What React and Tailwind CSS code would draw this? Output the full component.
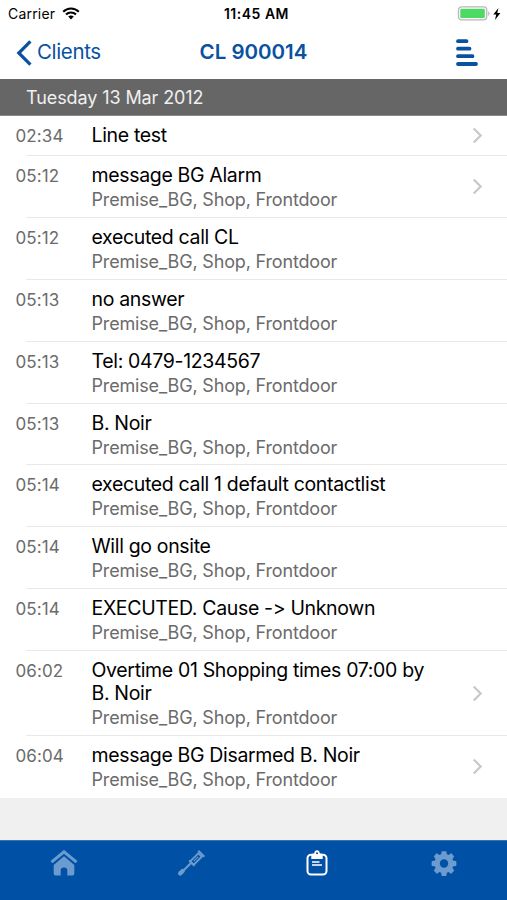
const entries = [
  { time: "02:34", title: "Line test", more: true },
  { time: "05:12", title: "message BG Alarm", place: true, more: true },
  { time: "05:12", title: "executed call CL", place: true },
  { time: "05:13", title: "no answer", place: true },
  { time: "05:13", title: "Tel: 0479-1234567", place: true },
  { time: "05:13", title: "B. Noir", place: true },
  { time: "05:14", title: "executed call 1 default contactlist", place: true },
  { time: "05:14", title: "Will go onsite", place: true },
  { time: "05:14", title: "EXECUTED. Cause -> Unknown", place: true },
  { time: "06:02", title: "Overtime 01 Shopping times 07:00 by B. Noir", place: true, more: true },
  { time: "06:04", title: "message BG Disarmed B. Noir", place: true, more: true },
];

function StatusBar() {
  return (
    <div className="grid h-[27px] grid-cols-3 items-center pl-[8px] pr-[6px] text-[14px] leading-none text-black">
      <div className="flex items-center gap-[7px]">
        <span className="tracking-[0.2px]">Carrier</span>
        <svg width="18" height="13" viewBox="0 0 18 13" fill="none" stroke="currentColor" strokeWidth="2.1">
          <path d="M1.2 4.7C5.6.4 12.4.4 16.8 4.7" />
          <path d="M4 7.6C6.8 4.8 11.2 4.8 14 7.6" />
          <path d="M9 12.4 6.2 9.5C7.8 8 10.2 8 11.8 9.5Z" fill="currentColor" stroke="none" />
        </svg>
      </div>
      <span className="pl-[4px] text-center font-semibold tracking-[0.5px]">11:45 AM</span>
      <div className="flex items-center justify-end gap-[3px]">
        <svg width="33" height="15" viewBox="0 0 33 15">
          <rect x="1.5" y="0.8" width="28.2" height="13" rx="3" fill="none" stroke="#b8b8b8" strokeWidth="1.3" />
          <rect x="3.3" y="2.7" width="24.5" height="9.4" rx="1" fill="#4cd964" />
          <path d="M31.2 5v5c1.7-.8 1.7-4.2 0-5Z" fill="#b8b8b8" />
        </svg>
        <svg width="8" height="12" viewBox="0 0 8 12" fill="currentColor">
          <path d="M5.4 0 .3 6.5h2.9L2 12l5.4-7H4.3Z" />
        </svg>
      </div>
    </div>
  );
}

function NavBar() {
  return (
    <header className="grid h-[52px] grid-cols-3 items-center text-[20.5px] text-[#08529f]">
      <button className="flex items-center gap-[5px] pb-px pl-4 tracking-[-0.35px]">
        <svg width="16" height="26" viewBox="0 0 16 26" fill="none" stroke="currentColor" strokeWidth="3.2">
          <path d="M14.4 1.4 2.8 13l11.6 11.6" />
        </svg>
        Clients
      </button>
      <h1 className="pb-px text-center font-semibold">CL 900014</h1>
      <button className="flex justify-end pb-px pr-7">
        <svg width="24" height="28" viewBox="0 0 24 28" fill="none" stroke="currentColor" strokeWidth="3.8" strokeLinecap="round">
          <path d="M3 2.2h8.5M3 9.7h11.5M3 17.2h14.5M3 25h18" />
        </svg>
      </button>
    </header>
  );
}

function Entry({ entry, last }) {
  return (
    <li className="pl-[26px]">
      <div className={last ? "flex h-[61.9px]" : entry.place ? "flex min-h-[61.9px] border-b border-[#e8e8e8]" : "flex h-[40px] border-b border-[#e8e8e8]"}>
        <time className="-ml-[10.5px] w-[76px] shrink-0 pt-[8px] text-[17px] leading-6 tracking-[0.1px] text-[#6b6b6b]">{entry.time}</time>
        <div className={entry.place ? "w-[350px] pb-[4.9px] pt-[8px]" : "w-[350px] pt-[8px]"}>
          <p className="text-[19.5px] leading-[23px] tracking-[-0.34px] text-black">{entry.title}</p>
          {entry.place && (
            <p className="text-[18px] leading-[25px] tracking-[-0.17px] text-[#6b6b6b]">Premise_BG, Shop, Frontdoor</p>
          )}
        </div>
        {entry.more && (
          <svg className="ml-auto mr-6 self-center" width="11" height="17" viewBox="0 0 11 17" fill="none" stroke="#c7c7cc" strokeWidth="2.2">
            <path d="m1.7 1.5 7 7-7 7" />
          </svg>
        )}
      </div>
    </li>
  );
}

function TabBar() {
  return (
    <nav className="mt-auto grid h-[60px] grid-cols-4 border-t border-[#3974a8] bg-[#0051a5] pt-[9px] text-[#6b9bcf]">
      <button className="flex items-start justify-center pl-[2px]">
        <svg width="28" height="27" viewBox="0 0 28 27">
          <path d="M1.5 12.2 14 1.8l12.5 10.4" fill="none" stroke="currentColor" strokeWidth="3" />
          <path d="m14 6.3 10.3 8.6v8.8q0 1.8-1.8 1.8h-5.2v-5.4q0-2.6-3.3-2.6t-3.3 2.6v5.4H5.5q-1.8 0-1.8-1.8v-8.8Z" fill="currentColor" />
        </svg>
      </button>
      <button className="flex items-start justify-center pl-[1px]">
        <svg width="28" height="27" viewBox="0 0 28 27" fill="none" stroke="currentColor">
          <path d="m4 23 10-10" strokeWidth="2.1" />
          <path d="m3.2 23.4 2.4-2.4" strokeWidth="4.4" strokeLinecap="round" />
          <path d="m13.2 11.4 8.1-8.1 3.4 3.4-8.1 8.1Z" strokeWidth="1.9" />
          <path d="m16.8 11.2 4.3-4.3" strokeWidth="1.1" />
          <path d="m21.3.7 6 6M12.2 10.4l5.4 5.4" strokeWidth="2" />
        </svg>
      </button>
      <button className="flex items-start justify-center text-white">
        <svg width="24" height="27" viewBox="0 0 24 27" fill="none" stroke="currentColor">
          <rect x="2.5" y="4.7" width="19" height="19.8" rx="3.5" strokeWidth="2" />
          <path d="M6.3 9V5.6q0-2 2.1-2h.8Q9.6.3 12 .3t2.8 3.3h.8q2.1 0 2.1 2V9Z" fill="currentColor" stroke="none" />
          <circle cx="12" cy="3.3" r="1" fill="#0051a5" stroke="none" />
          <path d="M7 12h7.5M7 15h10" strokeWidth="1.6" />
        </svg>
      </button>
      <button className="flex items-start justify-center">
        <svg width="28" height="27" viewBox="0 0 24 24">
          <path fill="currentColor" d="M10.4 1h3.2q.5 0 .6.6l.3 2.2 1.6.7 1.8-1.4q.4-.3.8.1l2.1 2.1q.4.4.1.8l-1.4 1.8.7 1.6 2.2.3q.6.1.6.6v3.2q0 .5-.6.6l-2.2.3-.7 1.6 1.4 1.8q.3.4-.1.8l-2.1 2.1q-.4.4-.8.1l-1.8-1.4-1.6.7-.3 2.2q-.1.6-.6.6h-3.2q-.5 0-.6-.6l-.3-2.2-1.6-.7-1.8 1.4q-.4.3-.8-.1l-2.1-2.1q-.4-.4-.1-.8l1.4-1.8-.7-1.6-2.2-.3Q1 14.1 1 13.6v-3.2q0-.5.6-.6l2.2-.3.7-1.6-1.4-1.8q-.3-.4.1-.8l2.1-2.1q.4-.4.8-.1l1.8 1.4 1.6-.7.3-2.2q.1-.6.6-.6Z" />
          <circle cx="12" cy="12" r="3.7" fill="#0051a5" />
        </svg>
      </button>
    </nav>
  );
}

export default function App() {
  return (
    <div className="flex h-screen w-full flex-col overflow-hidden bg-[#f0f0f0] font-['Inter',sans-serif]">
      <div className="bg-white">
        <StatusBar />
        <NavBar />
      </div>
      <h2 className="flex h-[37px] items-center border-b border-[#8a8a8a] bg-[#666] pl-[26px] text-[18px] tracking-[-0.1px] text-[#f0f0f0]">
        Tuesday 13 Mar 2012
      </h2>
      <ul className="bg-white">
        {entries.map((entry, i) => (
          <Entry key={i} entry={entry} last={i === entries.length - 1} />
        ))}
      </ul>
      <TabBar />
    </div>
  );
}
